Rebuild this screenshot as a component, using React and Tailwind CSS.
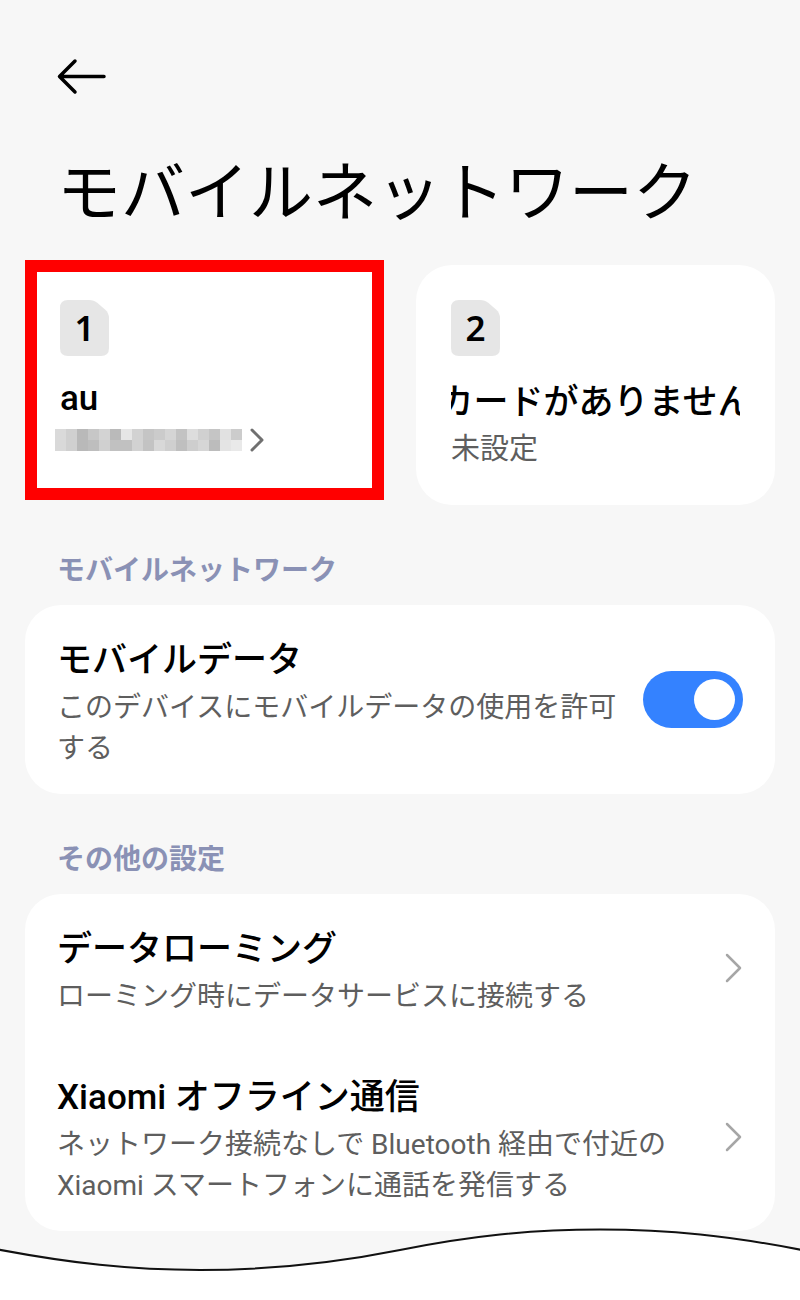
import { useState } from "react"

const maskedNumber = [
  ["#dadada", "#d0d0d0", "#b9b9b9", "#c7c7c7", "#d3d3d3", "#bababa", "#e6e6e6", "#d2d2d2", "#c5c5c5", "#cbcbcb", "#d5d5d5", "#c3c3c3", "#dddddd", "#d0d0d0", "#c5c5c5", "#e1e1e1", "#cccccc"],
  ["#d9d9d9", "#d0d0d0", "#b9b9b9", "#bebebe", "#d0d0d0", "#c1c1c1", "#c1c1c1", "#d2d2d2", "#c3c3c3", "#d8d8d8", "#cfcfcf", "#bfbfbf", "#cecece", "#d6d6d6", "#bcbcbc", "#e4e4e4", "#e9e9e9"],
]

function SimBadge({ number }) {
  return (
    <span className="relative flex h-14 w-[49px] items-center justify-center">
      <svg viewBox="0 0 49 56" className="absolute inset-0 h-full w-full" aria-hidden="true">
        <path
          d="M8 0H29Q34 0 37.500 3L45 9.500Q49 13 49 18V48Q49 56 41 56H8Q0 56 0 48V8Q0 0 8 0Z"
          fill="#e6e6e6"
        />
      </svg>
      <span className="relative font-['Noto_Sans',sans-serif] text-[35px] leading-14 font-semibold">{number}</span>
    </span>
  )
}

function RowChevron() {
  return (
    <svg viewBox="0 0 18 32" className="h-8 w-[18px] shrink-0" fill="none" aria-hidden="true">
      <path d="M2 3L15 16L2 29" stroke="#a6a6a6" strokeWidth="2.500" strokeLinecap="round" strokeLinejoin="round" />
    </svg>
  )
}

function SectionTitle({ children }) {
  return <h2 className="mt-[45px] mb-[14px] px-8 text-[28px] leading-[41px] font-bold text-[#8a91b5]">{children}</h2>
}

function SettingRow({ title, description }) {
  return (
    <button type="button" className="flex w-full items-center justify-between gap-4 px-8 text-left">
      <span className="block pt-[29px] pb-[25px]">
        <span className="block text-[35px] leading-[53px] font-medium">{title}</span>
        <span className="block text-[28px] leading-[41px] text-[#5e5e5e]">{description}</span>
      </span>
      <RowChevron />
    </button>
  )
}

export default function App() {
  const [mobileData, setMobileData] = useState(true)

  return (
    <div lang="ja" className="min-h-screen bg-white font-[Roboto,'Noto_Sans_CJK_JP',sans-serif] text-black">
      <div className="bg-[#f7f7f7]">
        <main className="px-[25px] pt-14">
          <header className="px-8">
            <button type="button" aria-label="戻る" className="block">
              <svg viewBox="0 0 49 40" className="h-10 w-[49px]" fill="none" aria-hidden="true">
                <path d="M47 20.500H3M18 5L2.500 20.500L18 36" stroke="#000" strokeWidth="3.500" strokeLinecap="round" strokeLinejoin="round" />
              </svg>
            </button>
            <h1 className="mt-[62px] text-[64px] leading-[72px] font-normal">モバイルネットワーク</h1>
          </header>

          <div className="mt-[30px] grid grid-cols-2 gap-8">
            <button type="button" className="block h-60 border-[12px] border-[#ff0000] bg-white px-[23px] pt-7 text-left">
              <span className="flex h-full flex-col items-start">
                <SimBadge number="1" />
                <span className="mt-4 block text-[35px] leading-[53px] font-medium">au</span>
                <span className="mt-[3px] -ml-[5px] flex items-center gap-2">
                  <span className="grid grid-cols-[repeat(17,11px)]">
                    {maskedNumber.flat().map((color, i) => (
                      <span key={i} className="h-[11px]" style={{ backgroundColor: color }} />
                    ))}
                  </span>
                  <svg viewBox="0 0 14 24" className="h-6 w-[14px]" fill="none" aria-hidden="true">
                    <path d="M2 2L12 12L2 22" stroke="#707070" strokeWidth="3" strokeLinecap="round" strokeLinejoin="round" />
                  </svg>
                </span>
              </span>
            </button>

            <button type="button" className="mt-[5px] block h-60 rounded-[36px] bg-white px-[35px] pt-[35px] text-left">
              <span className="flex h-full flex-col">
                <SimBadge number="2" />
                {/* scrolling label, runs past both ends of its box */}
                <span className="mt-5 flex justify-center overflow-hidden text-[35px] leading-[53px] font-medium whitespace-nowrap">
                  <span>カードがありません</span>
                </span>
                <span className="block text-[29px] leading-[41px] text-[#5e5e5e]">未設定</span>
              </span>
            </button>
          </div>

          <SectionTitle>モバイルネットワーク</SectionTitle>
          <section className="rounded-[36px] bg-white">
            <label className="flex items-center justify-between gap-4 px-8">
              <span className="block pt-[29px] pb-[25px]">
                <span className="block text-[35px] leading-[53px] font-medium">モバイルデータ</span>
                <span className="block text-[28px] leading-[41px] text-[#5e5e5e]">
                  このデバイスにモバイルデータの使用を許可する
                </span>
              </span>
              <input
                type="checkbox"
                role="switch"
                checked={mobileData}
                onChange={(e) => setMobileData(e.target.checked)}
                className="flex h-[57px] w-[100px] shrink-0 appearance-none items-center rounded-full bg-gray-300 px-2 before:block before:size-[41px] before:rounded-full before:bg-white checked:justify-end checked:bg-[#3482ff]"
              />
            </label>
          </section>

          <SectionTitle>その他の設定</SectionTitle>
          <section className="rounded-[36px] bg-white">
            <SettingRow title="データローミング" description="ローミング時にデータサービスに接続する" />
            <SettingRow
              title="Xiaomi オフライン通信"
              description="ネットワーク接続なしで Bluetooth 経由で付近の Xiaomi スマートフォンに通話を発信する"
            />
          </section>
        </main>

        {/* torn edge over the bottom of the last card */}
        <svg viewBox="0 0 800 72" preserveAspectRatio="none" className="relative -mt-1 block h-[72px] w-full" aria-hidden="true">
          <path
            d="M-2 22.500C70 36 130 43 200 43C270 43 330 37 400 23C470 9 530 2.500 600 2.500C670 2.500 730 9 802 23V80H-2Z"
            fill="#fff"
            stroke="#111"
            strokeWidth="2"
          />
        </svg>
      </div>
    </div>
  )
}
